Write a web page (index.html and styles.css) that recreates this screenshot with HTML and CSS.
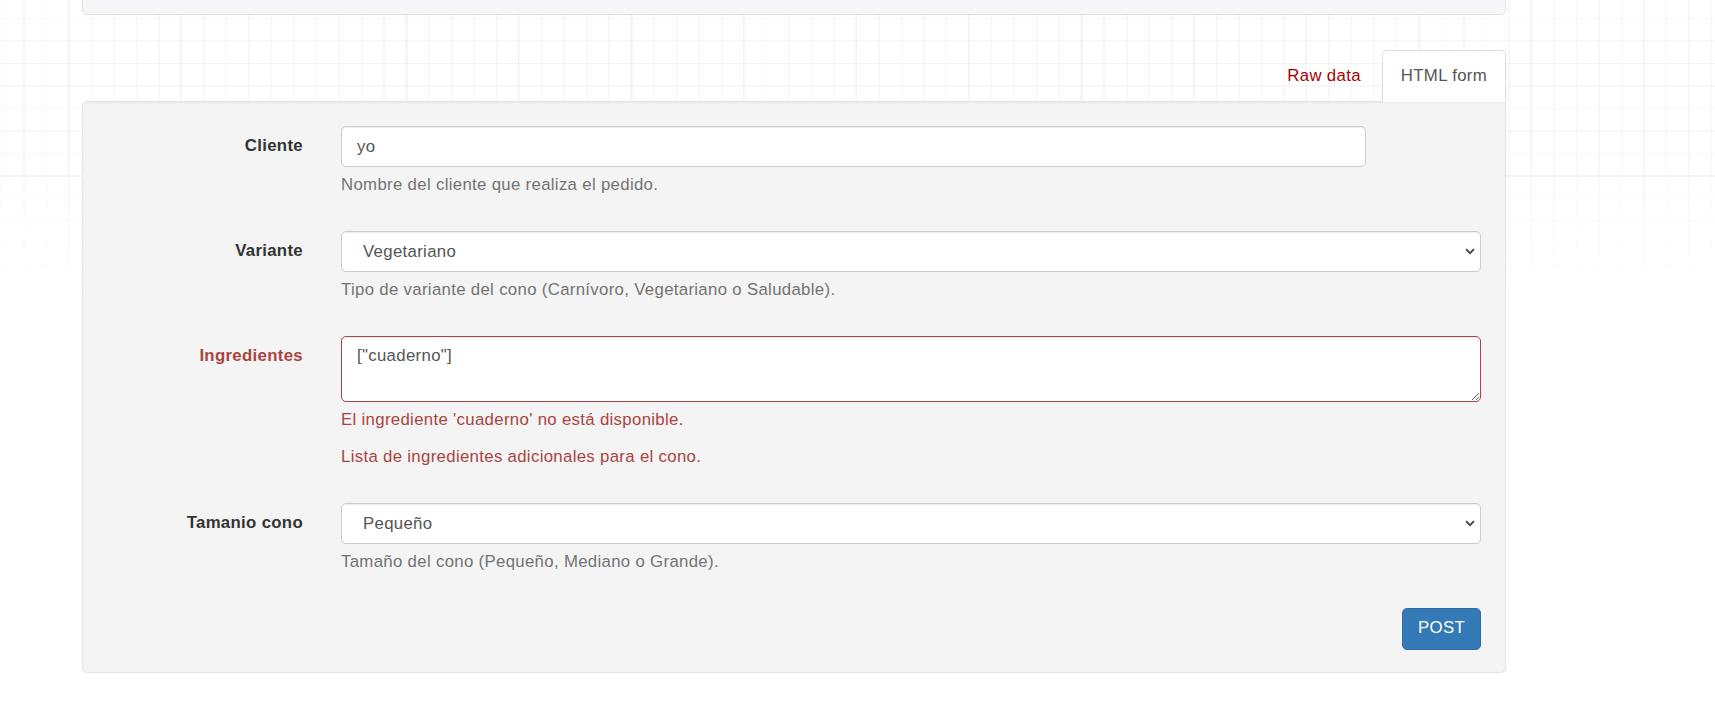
FILE: index.html
```html
<!DOCTYPE html>
<html lang="es">
<head>
<meta charset="utf-8">
<title>Pedido</title>
<link rel="stylesheet" href="styles.css">
</head>
<body>
<div class="page">
  <pre class="response">{
    "ingredientes": ["El ingrediente 'cuaderno' no está disponible."]
}</pre>

  <ul class="tabs">
    <li class="tab"><a class="tab-link">Raw data</a></li>
    <li class="tab active"><a class="tab-link">HTML form</a></li>
  </ul>

  <div class="well">
    <form class="form">
      <div class="group">
        <label class="label" for="cliente">Cliente</label>
        <div class="controls">
          <input class="input input-short" id="cliente" type="text" value="yo">
          <p class="help">Nombre del cliente que realiza el pedido.</p>
        </div>
      </div>

      <div class="group">
        <label class="label" for="variante">Variante</label>
        <div class="controls">
          <div class="select-wrap">
            <select class="input select" id="variante">
              <option>Vegetariano</option>
            </select>
            <svg class="chevron" width="10" height="7" viewBox="0 0 10 7"><path d="M1 1.2 L5 5.2 L9 1.2" fill="none" stroke="#454545" stroke-width="1.8"/></svg>
          </div>
          <p class="help">Tipo de variante del cono (Carnívoro, Vegetariano o Saludable).</p>
        </div>
      </div>

      <div class="group group-error">
        <label class="label" for="ingredientes">Ingredientes</label>
        <div class="controls">
          <textarea class="input textarea" id="ingredientes">["cuaderno"]</textarea>
          <p class="help help-error">El ingrediente 'cuaderno' no está disponible.</p>
          <p class="help help-second">Lista de ingredientes adicionales para el cono.</p>
        </div>
      </div>

      <div class="group">
        <label class="label" for="tamanio">Tamanio cono</label>
        <div class="controls">
          <div class="select-wrap">
            <select class="input select" id="tamanio">
              <option>Pequeño</option>
            </select>
            <svg class="chevron" width="10" height="7" viewBox="0 0 10 7"><path d="M1 1.2 L5 5.2 L9 1.2" fill="none" stroke="#454545" stroke-width="1.8"/></svg>
          </div>
          <p class="help">Tamaño del cono (Pequeño, Mediano o Grande).</p>
        </div>
      </div>

      <div class="actions">
        <button class="btn" type="button">POST</button>
      </div>
    </form>
  </div>
</div>
</body>
</html>
```

FILE: styles.css
```css
* {
  box-sizing: border-box;
}

html, body {
  margin: 0;
  padding: 0;
}

body {
  font-family: "Liberation Sans", Arial, Helvetica, sans-serif;
  font-size: 16.8px;
  line-height: 24px;
  letter-spacing: 0.32px;
  color: #333;
  min-height: 712px;
  background-color: #fff;
  background-image:
    linear-gradient(to bottom, rgba(255,255,255,0) 150px, #fff 295px),
    repeating-linear-gradient(to right, transparent 0 68px, rgba(0,0,0,0.022) 68px 69.5px, transparent 69.5px 112.5px),
    repeating-linear-gradient(to bottom, transparent 0 63px, rgba(0,0,0,0.022) 63px 64.5px, transparent 64.5px 112.5px),
    repeating-linear-gradient(to right, transparent 0 1px, rgba(0,0,0,0.028) 1px 2.5px, transparent 2.5px 22.5px),
    repeating-linear-gradient(to bottom, transparent 0 18px, rgba(0,0,0,0.028) 18px 19.5px, transparent 19.5px 22.5px);
  background-size: 100% 300px;
  background-repeat: no-repeat;
}

.page {
  width: 1424px;
  margin-left: 82px;
}

.response {
  margin: -75px 0 0 0;
  height: 90px;
  padding: 11px 12px;
  font-family: "Liberation Mono", "Courier New", monospace;
  font-size: 15.6px;
  line-height: 22px;
  letter-spacing: 0;
  color: #333;
  background: #f7f7f9;
  border: 1px solid #e1e1e8;
  border-radius: 5px;
  overflow: hidden;
  white-space: pre;
}

.tabs {
  list-style: none;
  margin: 35px 0 -1px 0;
  padding: 0;
  display: flex;
  justify-content: flex-end;
  position: relative;
  z-index: 1;
}

.tab {
  margin-left: 2px;
}

.tab-link {
  display: block;
  padding: 13px 18px;
  line-height: 24px;
  border: 1px solid transparent;
  border-radius: 5px 5px 0 0;
  color: #a80000;
  cursor: pointer;
}

.tab.active .tab-link {
  color: #555;
  background: #fff;
  border-color: #ddd #ddd transparent #ddd;
}

.well {
  background: #f4f4f4;
  border: 1px solid #e3e3e3;
  border-radius: 5px;
  border-top-right-radius: 0;
  box-shadow: inset 0 1px 1px rgba(0,0,0,0.05);
  padding: 24px 24px 22px 24px;
}

.form {
  margin: 0;
}

.group {
  display: grid;
  grid-template-columns: 196px 1fr;
  column-gap: 38px;
  margin-bottom: 34px;
}

.label {
  text-align: right;
  font-weight: bold;
  padding-top: 8px;
  line-height: 24px;
  color: #333;
}

.group-error .label {
  color: #a94442;
}

.controls {
  min-width: 0;
}

.input {
  display: block;
  width: 100%;
  height: 41px;
  margin: 0;
  padding: 0 15px;
  font-family: "Liberation Sans", Arial, Helvetica, sans-serif;
  font-size: 16.8px;
  line-height: 24px;
  letter-spacing: 0.32px;
  color: #555;
  background: #fff;
  border: 1px solid #ccc;
  border-radius: 5px;
  box-shadow: inset 0 1px 1px rgba(0,0,0,0.075);
  outline: none;
}

.input-short {
  width: 1025px;
}

.select-wrap {
  position: relative;
}

.select {
  -webkit-appearance: none;
  appearance: none;
  padding-left: 21px;
  padding-right: 30px;
}

.chevron {
  position: absolute;
  right: 6px;
  top: 17px;
  pointer-events: none;
}

.textarea {
  height: 66px;
  padding: 7px 15px;
  border-color: #a94442;
  resize: both;
}

.help {
  margin: 6px 0 0 0;
  line-height: 24px;
  color: #737373;
}

.help-error {
  color: #a94442;
}

.group-error .help {
  color: #a94442;
}

.help-second {
  margin-top: 13px;
}

.actions {
  display: flex;
  justify-content: flex-end;
}

.btn {
  font-family: "Liberation Sans", Arial, Helvetica, sans-serif;
  font-size: 16.8px;
  line-height: 24px;
  letter-spacing: 0.32px;
  padding: 7px 15px 9px 15px;
  color: #fff;
  background: #337ab7;
  border: 1px solid #2e6da4;
  border-radius: 5px;
  cursor: pointer;
}
```
